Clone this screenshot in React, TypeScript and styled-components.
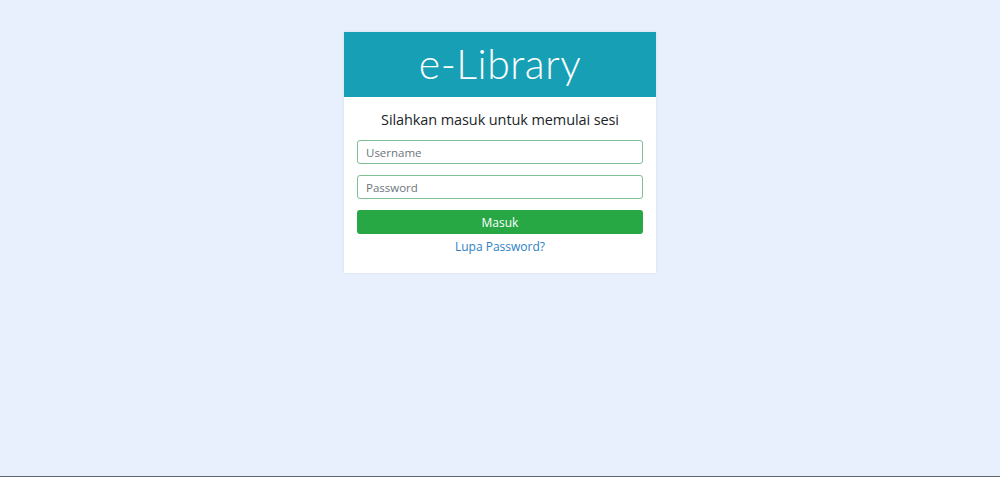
import React from 'react';
import styled, { createGlobalStyle } from 'styled-components';

const GlobalStyle = createGlobalStyle`
    html, body {
        margin: 0;
        padding: 0;
        background-color: #E8F0FE;
    }
    * {
        box-sizing: border-box;
    }
`;

const Page = styled.div`
    min-height: 100vh;
    display: flex;
    flex-direction: column;
    align-items: center;
    padding-top: 32px;
    background-color: #E8F0FE;
    border-bottom: 1px solid #5C6670;
    font-family: "Open Sans", "DejaVu Sans", sans-serif;
`;

const Card = styled.div`
    width: 312px;
    background-color: #FFFFFF;
    box-shadow: 0 0 3px rgba(0, 0, 0, 0.08);
    display: flex;
    flex-direction: column;
`;

const Header = styled.div`
    height: 65px;
    background-color: #179FB5;
    color: #FFFFFF;
    display: flex;
    align-items: center;
    justify-content: center;
    font-family: "Lato", sans-serif;
    font-weight: 300;
    font-size: 41px;
    letter-spacing: 0.5px;
    padding-bottom: 3px;
`;

const Body = styled.div`
    padding: 13px 13px 19px;
    display: flex;
    flex-direction: column;
    gap: 11px;
`;

const Subtitle = styled.p`
    margin: 1px 0 0;
    text-align: center;
    font-size: 14.5px;
    color: #212529;
    line-height: 18px;
    letter-spacing: -0.1px;
`;

const Input = styled.input`
    height: 24px;
    width: 100%;
    border: 1px solid #7FBF94;
    border-radius: 3px;
    padding: 0 8px;
    font-family: inherit;
    font-size: 11.5px;
    color: #495057;
    outline: none;
    &::placeholder {
        color: #6C757D;
    }
`;

const Button = styled.button`
    height: 24px;
    width: 100%;
    border: none;
    border-radius: 3px;
    background-color: #28A745;
    color: #FFFFFF;
    font-family: inherit;
    font-size: 12px;
    cursor: pointer;
`;

const Link = styled.a`
    display: block;
    text-align: center;
    font-size: 12px;
    line-height: 14px;
    color: #2B7FC4;
    text-decoration: none;
    margin-top: -5px;
`;

const App = () => {
    return (
        <>
            <GlobalStyle />
            <Page>
                <Card>
                    <Header>e-Library</Header>
                    <Body>
                        <Subtitle>Silahkan masuk untuk memulai sesi</Subtitle>
                        <Input type='text' placeholder='Username' />
                        <Input type='password' placeholder='Password' />
                        <Button>Masuk</Button>
                        <Link href='#'>Lupa Password?</Link>
                    </Body>
                </Card>
            </Page>
        </>
    );
};

export default App;
